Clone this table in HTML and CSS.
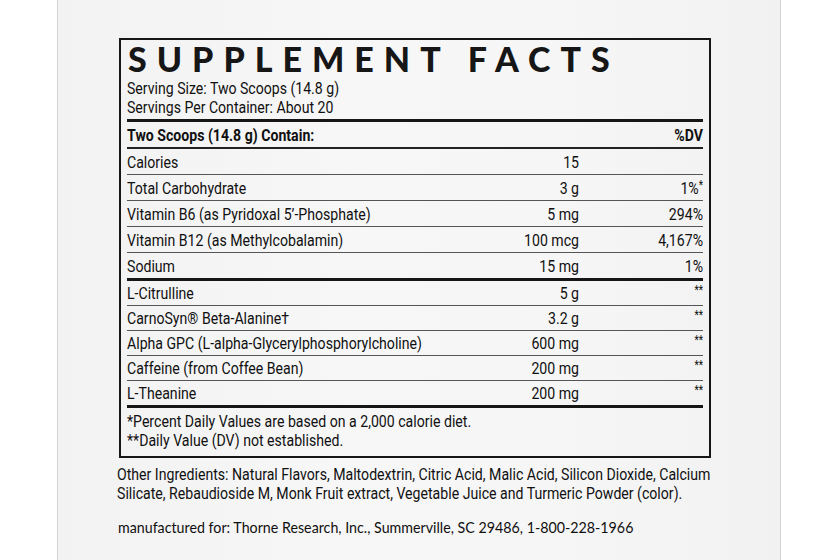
FILE: index.html
```html
<!DOCTYPE html>
<html lang="en">
<head>
<meta charset="utf-8">
<title>Supplement Facts</title>
<link rel="stylesheet" href="styles.css">
</head>
<body>
<div class="panel">
  <section class="facts">
    <h1 class="title">SUPPLEMENT FACTS</h1>
    <div class="serving">
      <div><span class="cond">Serving Size: Two Scoops (14.8 g)</span></div>
      <div><span class="cond">Servings Per Container: About 20</span></div>
    </div>
    <div class="table">
      <div class="row head"><span class="name">Two Scoops (14.8 g) Contain:</span><span class="amt"></span><span class="dv">%DV</span></div>
      <div class="row"><span class="name">Calories</span><span class="amt">15</span><span class="dv"></span></div>
      <div class="row"><span class="name">Total Carbohydrate</span><span class="amt">3 g</span><span class="dv">1%<sup class="star">*</sup></span></div>
      <div class="row"><span class="name">Vitamin B6 (as Pyridoxal 5’-Phosphate)</span><span class="amt">5 mg</span><span class="dv">294%</span></div>
      <div class="row"><span class="name">Vitamin B12 (as Methylcobalamin)</span><span class="amt">100 mcg</span><span class="dv">4,167%</span></div>
      <div class="row end"><span class="name">Sodium</span><span class="amt">15 mg</span><span class="dv">1%</span></div>
      <div class="row tight"><span class="name">L-Citrulline</span><span class="amt">5 g</span><span class="dv"><sup class="star">**</sup></span></div>
      <div class="row tight"><span class="name">CarnoSyn® Beta-Alanine†</span><span class="amt">3.2 g</span><span class="dv"><sup class="star">**</sup></span></div>
      <div class="row tight"><span class="name">Alpha GPC (L-alpha-Glycerylphosphorylcholine)</span><span class="amt">600 mg</span><span class="dv"><sup class="star">**</sup></span></div>
      <div class="row tight"><span class="name">Caffeine (from Coffee Bean)</span><span class="amt">200 mg</span><span class="dv"><sup class="star">**</sup></span></div>
      <div class="row tight end"><span class="name">L-Theanine</span><span class="amt">200 mg</span><span class="dv"><sup class="star">**</sup></span></div>
    </div>
    <div class="notes">
      <div><span class="cond">*Percent Daily Values are based on a 2,000 calorie diet.</span></div>
      <div><span class="cond">**Daily Value (DV) not established.</span></div>
    </div>
  </section>
  <p class="other">Other Ingredients: Natural Flavors, Maltodextrin, Citric Acid, Malic Acid, Silicon Dioxide, Calcium<br>Silicate, Rebaudioside M, Monk Fruit extract, Vegetable Juice and Turmeric Powder (color).</p>
  <p class="mfg"><span class="cond">manufactured for: Thorne Research, Inc., Summerville, SC 29486, 1-800-228-1966</span></p>
</div>
</body>
</html>
```
FILE: styles.css
```css
html, body {
  margin: 0;
  padding: 0;
  background: #ffffff;
}
body {
  width: 840px;
  height: 560px;
  overflow: hidden;
}
.panel {
  margin-left: 57px;
  width: 724px;
  height: 560px;
  box-sizing: border-box;
  border-left: 1px solid #d2d2d2;
  border-right: 1px solid #d2d2d2;
  background: linear-gradient(90deg, #f2f2f2 0%, #f7f7f7 40%, #f6f6f6 70%, #f1f1f1 100%);
  padding: 38px 0 0 61px;
  color: #101010;
  font-family: "Roboto", "Liberation Sans", sans-serif;
}
.cond {
  display: inline-block;
  white-space: nowrap;
  transform: scaleX(0.83);
  transform-origin: left center;
}
.facts {
  width: 592px;
  box-sizing: border-box;
  border: 2px solid #161616;
  padding: 0 6px 0 6px;
}
.title {
  margin: -1px 0 0;
  padding: 0 0 0 1px;
  font-family: "Lato", sans-serif;
  font-weight: 900;
  font-size: 34px;
  line-height: 40px;
  letter-spacing: 10px;
  color: #161616;
}
.serving {
  font-size: 16px;
  line-height: 19px;
  padding: 0 0 2px;
  border-bottom: 3px solid #161616;
}
.serving .cond {
  transform: scaleX(0.88);
}
.row {
  display: grid;
  grid-template-columns: minmax(0, 1fr) 150px 124px;
  height: 25px;
  align-items: center;
  border-bottom: 1px solid #555;
  font-size: 17px;
  line-height: 18px;
}
.row > span {
  display: block;
  white-space: nowrap;
  transform: scaleX(0.83);
}
.row .name {
  transform-origin: left center;
}
.row .amt, .row .dv {
  text-align: right;
  transform-origin: right center;
}
.row.tight {
  height: 24px;
}
.row.head {
  font-weight: bold;
  height: 25px;
  border-bottom: 2px solid #222;
}
.row.end {
  border-bottom: 3px solid #161616;
}
.star {
  font-size: 12px;
  line-height: 0;
  vertical-align: 5px;
}
.notes {
  font-size: 17px;
  line-height: 19px;
  padding: 4px 0 6px;
}
.other {
  margin: 7px 0 0 -2px;
  width: 720px;
  white-space: nowrap;
  font-size: 17px;
  line-height: 19px;
  transform: scaleX(0.83);
  transform-origin: left top;
}
.mfg {
  margin: 15px 0 0 -1px;
  font-family: "Lato", sans-serif;
  font-size: 16px;
  line-height: 18px;
}
.mfg .cond {
  transform: scaleX(0.89);
}
```
